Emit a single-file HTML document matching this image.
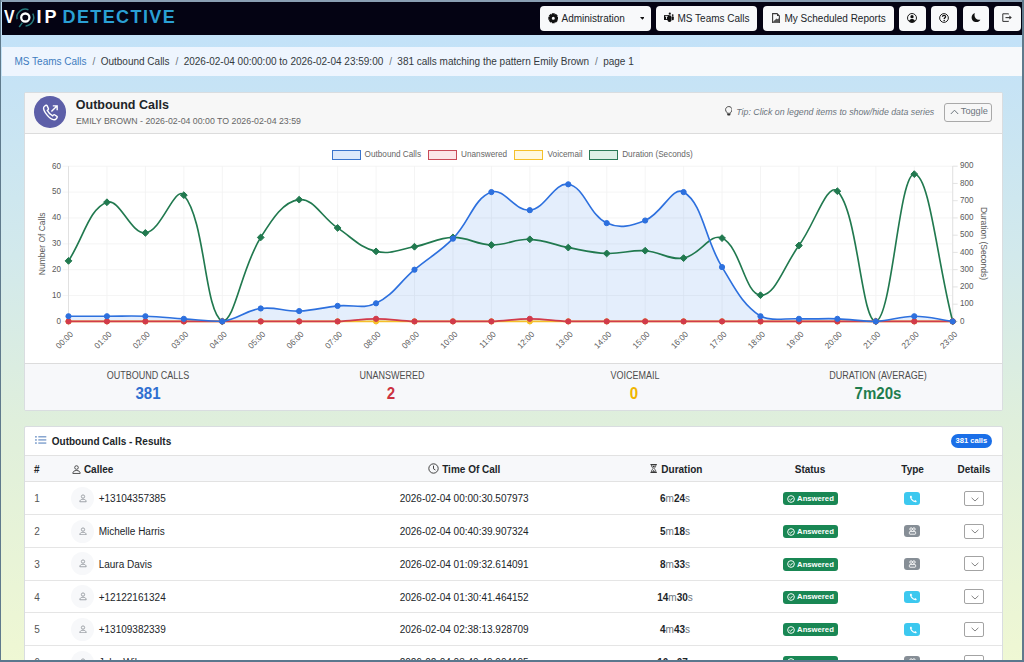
<!DOCTYPE html>
<html><head><meta charset="utf-8">
<style>
*{box-sizing:border-box;margin:0;padding:0}
html,body{width:1024px;height:662px;overflow:hidden}
body{position:relative;font-family:"Liberation Sans",sans-serif;color:#212529;
background:linear-gradient(180deg,#c2e1f8 0px,#c3e2f8 40px,#c6e3f5 85px,#d2e9ec 255px,#dfefdc 420px,#eef7d4 645px,#eff8d4 662px);}
.abs{position:absolute}
.t{position:absolute;white-space:nowrap;line-height:1}
.frame-t{left:0;top:0;width:1024px;height:1.5px;background:#8a9fb3}
.frame-l{left:0;top:0;width:1.4px;height:662px;background:#5f7a8c}
.frame-r{right:0;top:0;width:2px;height:662px;background:#5f7a8c}
.frame-b{left:0;bottom:0;width:1024px;height:2px;background:#5a788e}
.nav{left:1.5px;top:1.5px;width:1020.5px;height:33.5px;background:#040313}
.btn{position:absolute;top:6px;height:25px;background:#f8f9fa;border-radius:4px;font-size:10px;color:#212529;white-space:nowrap}
.btn svg{position:absolute}
.crumbbar{left:1.5px;top:47px;width:1020px;height:29px;background:#f7f9fb}
.crumb{left:1.5px;top:47px;width:638.5px;height:29px;background:#eef5fe;font-size:10px;line-height:29px;padding-left:13px;color:#343a40;white-space:nowrap}
.crumb a{color:#3d7cc0;text-decoration:none}
.crumb .sep{padding:0 5.3px 0 6px;color:#6c757d}
.card{position:absolute;background:#fff;border:1px solid #d9dde0;border-radius:2px;overflow:hidden}
.lbl{font-size:10px;color:#4d4d4d;text-transform:uppercase}
.big{font-size:16px;font-weight:700}
.th{font-size:10px;font-weight:700;color:#212529}
.td{font-size:10px;color:#212529}
.badge-ans{position:absolute;width:55.6px;height:13.1px;background:#198754;border-radius:3px;color:#fff;font-size:7.7px;font-weight:700}
.typeb{position:absolute;width:16.4px;height:12.4px;border-radius:3px}
.detb{position:absolute;width:20px;height:15px;border:1px solid #a3a3a3;border-radius:2px;background:#fff}
.av{position:absolute;width:23px;height:23px;border-radius:50%;background:#f7f8fa}
.rowline{position:absolute;left:0;width:978px;height:1px;background:#e5e5e5}
</style></head><body>
<div class="abs frame-t"></div>
<div class="abs nav"></div>

<!-- logo -->
<div class="t" style="left:3.5px;top:7.5px;font-size:18px;font-weight:700;color:#fff;transform:scaleX(0.88);transform-origin:left">V</div>
<svg class="abs" style="left:14px;top:6px" width="24" height="24" viewBox="0 0 24 24">
  <path d="M3.08,13.25 A8.4,8.4 0 0 1 14.45,3.71" fill="none" stroke="#25797c" stroke-width="1.5"/>
  <path d="M18.72,7.56 A8.4,8.4 0 0 1 11.59,19.89" fill="none" stroke="#25797c" stroke-width="1.5"/>
  <ellipse cx="11.3" cy="11.5" rx="4.1" ry="4.0" fill="none" stroke="#fff" stroke-width="2.3"/>
  <path d="M8.4,16.6 L5.2,21" stroke="#25797c" stroke-width="1.5"/>
</svg>
<div class="t" style="left:36.5px;top:7.5px;font-size:18px;font-weight:700;color:#fff">I</div>
<div class="t" style="left:44.5px;top:7.5px;font-size:18px;font-weight:700;color:#fff">P</div>
<div class="t" style="left:62.5px;top:7.5px;font-size:18px;font-weight:700;color:#2a9fd4;letter-spacing:1.4px">DETECTIVE</div>

<!-- nav buttons -->
<div class="btn" style="left:540px;width:111px">
  <svg style="left:7.6px;top:7.4px" width="10.6" height="10.6" viewBox="0 0 16 16"><path fill="#111" fill-rule="evenodd" d="M13.34,5.74 L15.50,5.84 L15.50,10.16 L13.34,10.26 L13.37,10.18 L14.82,11.78 L11.78,14.82 L10.18,13.37 L10.26,13.34 L10.16,15.50 L5.84,15.50 L5.74,13.34 L5.82,13.37 L4.22,14.82 L1.18,11.78 L2.63,10.18 L2.66,10.26 L0.50,10.16 L0.50,5.84 L2.66,5.74 L2.63,5.82 L1.18,4.22 L4.22,1.18 L5.82,2.63 L5.74,2.66 L5.84,0.50 L10.16,0.50 L10.26,2.66 L10.18,2.63 L11.78,1.18 L14.82,4.22 L13.37,5.82Z M10.3,8 A2.3,2.3 0 1 0 5.7,8 A2.3,2.3 0 1 0 10.3,8Z"/></svg>
  <span class="t" style="left:21.5px;top:8.3px">Administration</span>
  <svg style="left:99.7px;top:11.1px" width="4.8" height="2.8" viewBox="0 0 6 3.5"><path d="M0,0 L6,0 L3,3.5z" fill="#111"/></svg>
</div>
<div class="btn" style="left:655.9px;width:101.6px">
  <svg style="left:8.1px;top:6px" width="11" height="12" viewBox="0 0 11 12"><rect x="3.6" y="3.2" width="3.8" height="6.8" rx="1.7" fill="#111"/><circle cx="5.8" cy="1.7" r="1.1" fill="#111"/><circle cx="8.7" cy="3.1" r="0.9" fill="#111"/><rect x="7.7" y="4.3" width="2.1" height="3.9" rx="0.9" fill="#111"/><rect x="0" y="2.9" width="5" height="5.2" rx="0.5" fill="#111"/><path d="M1.2,4.3 H3.8 M2.5,4.3 V7.1" stroke="#f8f9fa" stroke-width="0.9"/></svg>
  <span class="t" style="left:21.6px;top:8.3px">MS Teams Calls</span>
</div>
<div class="btn" style="left:763px;width:131px">
  <svg style="left:9px;top:6.6px" width="8" height="10.4" viewBox="0 0 8 10.4"><path d="M0.6,0.6 H5 L7.4,3 V9.8 H0.6z" fill="none" stroke="#3a3a3a" stroke-width="1.1"/><path d="M5,0.6 L7.4,3 H5z" fill="#3a3a3a"/><path d="M1.2,9.3 L1.2,8.6 L4.6,5.4 L5.6,6.3 L7,5.2 V9.3z" fill="#555"/></svg>
  <span class="t" style="left:21.5px;top:8.3px">My Scheduled Reports</span>
</div>
<div class="btn" style="left:899px;width:26.5px">
  <svg style="left:8.2px;top:6.6px" width="10" height="10" viewBox="0 0 16 16"><circle cx="8" cy="8" r="7.2" fill="none" stroke="#111" stroke-width="1.5"/><circle cx="8" cy="5.8" r="2.6" fill="#111"/><path d="M3.2,12.6 C4.3,10.4 6,9.6 8,9.6 C10,9.6 11.7,10.4 12.8,12.6 C11.5,14 9.9,14.8 8,14.8 C6.1,14.8 4.5,14 3.2,12.6z" fill="#111"/></svg>
</div>
<div class="btn" style="left:930.5px;width:26.5px">
  <svg style="left:8.2px;top:6.6px" width="10" height="10" viewBox="0 0 16 16"><circle cx="8" cy="8" r="7" fill="none" stroke="#111" stroke-width="1.5"/><path d="M5.5,6.1 C5.5,4.5 6.6,3.6 8,3.6 C9.5,3.6 10.6,4.6 10.6,5.9 C10.6,7.6 8.3,7.7 8.3,9.6" fill="none" stroke="#111" stroke-width="2"/><circle cx="8.3" cy="12" r="1.25" fill="#111"/></svg>
</div>
<div class="btn" style="left:962.5px;width:26.5px">
  <svg style="left:8.2px;top:6.3px" width="10" height="11" viewBox="0 0 16 16"><path d="M6,0.6 C3,1.6 1,4.5 1,7.8 C1,12 4.3,15.3 8.5,15.3 C11.4,15.3 13.8,13.7 15,11.4 C14.3,11.6 13.6,11.7 12.8,11.7 C8.9,11.7 5.6,8.5 5.6,4.5 C5.6,3.1 5.8,1.8 6,0.6z" fill="#111"/></svg>
</div>
<div class="btn" style="left:994px;width:26.5px">
  <svg style="left:8px;top:7px" width="11" height="10" viewBox="0 0 11 10"><path d="M6.5,1.3 V0.8 H0.8 V8.4 H6.5 V7.9" fill="none" stroke="#333" stroke-width="1"/><path d="M3.5,4.6 H9" stroke="#333" stroke-width="1.1"/><path d="M7.4,2.6 L9.8,4.6 L7.4,6.6" fill="#333"/></svg>
</div>

<div class="abs crumbbar"></div>
<div class="abs crumb"><a>MS Teams Calls</a><span class="sep">/</span>Outbound Calls<span class="sep">/</span>2026-02-04 00:00:00 to 2026-02-04 23:59:00<span class="sep">/</span>381 calls matching the pattern Emily Brown<span class="sep">/</span>page 1</div>

<!-- chart card -->
<div class="card" style="left:24px;top:92px;width:978.5px;height:318.5px">
  <div class="abs" style="left:0;top:0;width:978px;height:41px;background:#f7f7f7;border-bottom:1px solid #dcdcdc"></div>
  <div class="abs" style="left:0;top:270px;width:978px;height:48.5px;background:#f7f8fa;border-top:1px solid #dcdcdc"></div>
</div>
<div class="abs" style="left:34.2px;top:96.2px;width:31.6px;height:31.6px;border-radius:50%;background:#5d5fa8"></div>
<svg class="abs" style="left:38.5px;top:100.5px" width="23" height="23" viewBox="0 0 20 20"><path d="M6.2,3.6 L4.8,4.6 C3.6,5.5 3.8,7.6 5.6,10.3 C7.6,13.2 10.2,15.6 12.4,16.2 C13.6,16.5 14.5,16.1 15.2,15.2 L15.8,14.3 C16,14 15.9,13.6 15.6,13.4 L13.5,12 C13.2,11.8 12.8,11.9 12.6,12.1 L11.9,12.9 C10,12 8.1,10 7.2,8.2 L8,7.5 C8.3,7.3 8.3,6.9 8.2,6.6 L7,4 C6.8,3.6 6.5,3.5 6.2,3.6z" fill="none" stroke="#fff" stroke-width="1.2"/><path d="M10.8,9.2 L15.6,4.4 M12,4.2 H15.8 V8" fill="none" stroke="#fff" stroke-width="1.2"/></svg>
<div class="t" style="left:75.8px;top:99.3px;font-size:12.5px;font-weight:700;color:#212529">Outbound Calls</div>
<div class="t" style="left:75.8px;top:115.9px;font-size:9.4px;color:#666;transform:scaleX(0.937);transform-origin:left">EMILY BROWN - 2026-02-04 00:00 TO 2026-02-04 23:59</div>
<svg class="abs" style="left:724.6px;top:106.4px" width="7.6" height="9.8" viewBox="0 0 9 11.5"><path d="M2.3,7.6 C1.2,6.6 0.7,5.5 0.7,4.3 C0.7,2.2 2.4,0.6 4.5,0.6 C6.6,0.6 8.3,2.2 8.3,4.3 C8.3,5.5 7.8,6.6 6.7,7.6 L6.5,8.6 H2.5z" fill="none" stroke="#444" stroke-width="1.15"/><path d="M2.6,9.3 H6.4 V10.2 C6.4,10.8 5.9,11.2 5.3,11.2 H3.7 C3.1,11.2 2.6,10.8 2.6,10.2z" fill="#333"/></svg>
<div class="t" style="left:736.3px;top:107.6px;font-size:8.8px;font-style:italic;color:#6c757d">Tip: Click on legend items to show/hide data series</div>
<div class="abs" style="left:944px;top:102.8px;width:47.8px;height:19px;border:1px solid #a9a9a9;border-radius:3px"></div>
<svg class="abs" style="left:950px;top:109px" width="9" height="6" viewBox="0 0 9 6"><path d="M0.8,5 L4.5,1.2 L8.2,5" fill="none" stroke="#6c757d" stroke-width="1"/></svg>
<div class="t" style="left:960.8px;top:107.2px;font-size:9.2px;color:#6c757d">Toggle</div>

<!-- legend -->
<div class="abs" style="left:331.5px;top:150.3px;width:29px;height:9.8px;border:1.6px solid #3a74cc;background:#dde9fb"></div>
<div class="t" style="left:364.6px;top:151px;font-size:8.2px;color:#666">Outbound Calls</div>
<div class="abs" style="left:428.2px;top:150.3px;width:28.8px;height:9.8px;border:1.6px solid #c84a58;background:#fbe5e8"></div>
<div class="t" style="left:461.1px;top:151px;font-size:8.2px;color:#666">Unanswered</div>
<div class="abs" style="left:514.2px;top:150.3px;width:28.9px;height:9.8px;border:1.6px solid #f5c02a;background:#fff8e0"></div>
<div class="t" style="left:547.6px;top:151px;font-size:8.2px;color:#666">Voicemail</div>
<div class="abs" style="left:589.4px;top:150.3px;width:28.9px;height:9.8px;border:1.6px solid #2b7a57;background:#ddf0e6"></div>
<div class="t" style="left:622.2px;top:151px;font-size:8.2px;color:#666">Duration (Seconds)</div>

<!-- stats -->
<div class="t lbl" style="left:148.2px;top:371.2px;transform:translateX(-50%) scaleX(0.9)">Outbound Calls</div>
<div class="t big" style="left:148.2px;top:386.4px;transform:translateX(-50%) scaleX(0.94);color:#2f6fd0">381</div>
<div class="t lbl" style="left:391.6px;top:371.2px;transform:translateX(-50%) scaleX(0.9)">Unanswered</div>
<div class="t big" style="left:391.4px;top:386.4px;transform:translateX(-50%) scaleX(0.94);color:#cc3340">2</div>
<div class="t lbl" style="left:634.6px;top:371.2px;transform:translateX(-50%) scaleX(0.9)">Voicemail</div>
<div class="t big" style="left:634.4px;top:386.4px;transform:translateX(-50%) scaleX(0.94);color:#f0b500">0</div>
<div class="t lbl" style="left:877.8px;top:371.2px;transform:translateX(-50%) scaleX(0.9)">Duration (Average)</div>
<div class="t big" style="left:878px;top:386.4px;transform:translateX(-50%) scaleX(0.94);color:#1f7d4d">7m20s</div>

<!-- results card -->
<div class="card" style="left:24px;top:425.5px;width:978.5px;height:260px">
  <div class="abs" style="left:0;top:28px;width:978px;height:27.5px;background:#f7f8fa;border-top:1px solid #e2e2e2;border-bottom:1px solid #e2e2e2"></div>
  <div class="rowline" style="top:87.80px"></div>
<div class="rowline" style="top:120.50px"></div>
<div class="rowline" style="top:153.20px"></div>
<div class="rowline" style="top:185.90px"></div>
<div class="rowline" style="top:218.60px"></div>
<div class="rowline" style="top:251.30px"></div>
</div>
<svg class="abs" style="left:34.6px;top:436.3px" width="12" height="8" viewBox="0 0 12 8"><g fill="#4a78b8"><rect x="0.2" y="0.2" width="1.5" height="1.3"/><rect x="0.2" y="3.3" width="1.5" height="1.3"/><rect x="0.2" y="6.4" width="1.5" height="1.3"/></g><path d="M3.3,0.85 H11.3 M3.3,3.95 H11.3 M3.3,7.05 H11.3" stroke="#4a78b8" stroke-width="1"/></svg>
<div class="t" style="left:51.8px;top:436.7px;font-size:10px;font-weight:700;color:#212529">Outbound Calls - Results</div>
<div class="abs" style="left:950.7px;top:434.2px;width:41px;height:13.5px;border-radius:7px;background:#1a6fe8"></div>
<div class="t" style="left:955.5px;top:437.3px;font-size:7.6px;font-weight:700;color:#fff">381 calls</div>

<!-- table header -->
<div class="t th" style="left:34px;top:465.0px">#</div>
<svg class="abs" style="left:71.5px;top:464.8px" width="9" height="9" viewBox="0 0 16 16"><circle cx="8" cy="4.5" r="3.2" fill="none" stroke="#333" stroke-width="1.5"/><path d="M1.5,15 C1.5,11.5 4,9.8 8,9.8 C12,9.8 14.5,11.5 14.5,15z" fill="none" stroke="#333" stroke-width="1.5"/></svg>
<div class="t th" style="left:83.9px;top:465.0px">Callee</div>
<svg class="abs" style="left:428.2px;top:463.4px" width="11" height="11" viewBox="0 0 16 16"><circle cx="8" cy="8" r="6.8" fill="none" stroke="#3a3a3a" stroke-width="1.4"/><path d="M8,3.8 V8.4 L10.8,10.2" fill="none" stroke="#3a3a3a" stroke-width="1.4"/></svg>
<div class="t th" style="left:442.2px;top:465.0px">Time Of Call</div>
<svg class="abs" style="left:649.9px;top:464.1px" width="7.3" height="9" viewBox="0 0 8 10" preserveAspectRatio="none"><path d="M0.5,0.5 H7.5 M0.5,9.5 H7.5" stroke="#222" stroke-width="1"/><path d="M1.4,0.8 C1.4,3.4 3.3,4.2 3.3,5 C3.3,5.8 1.4,6.6 1.4,9.2 H6.6 C6.6,6.6 4.7,5.8 4.7,5 C4.7,4.2 6.6,3.4 6.6,0.8z" fill="none" stroke="#333" stroke-width="0.9"/><path d="M2.3,2 H5.7 L4,4.3z M2.2,8.6 L4,6.6 L5.8,8.6z" fill="#333"/></svg>
<div class="t th" style="left:661.3px;top:465.0px">Duration</div>
<div class="t th" style="left:810px;top:465.0px;transform:translateX(-50%)">Status</div>
<div class="t th" style="left:912.6px;top:465.0px;transform:translateX(-50%)">Type</div>
<div class="t th" style="left:973.9px;top:465.0px;transform:translateX(-50%)">Details</div>

<div class="t td" style="left:34.3px;top:494.40px;color:#555">1</div>
<div class="av" style="left:70.6px;top:487.00px"></div>
<svg class="abs" style="left:78.5px;top:494.00px" width="8" height="8.5" viewBox="0 0 16 16"><circle cx="8" cy="4.6" r="3.3" fill="none" stroke="#8a8f96" stroke-width="1.6"/><path d="M1.6,15 C1.6,11.6 4.2,10 8,10 C11.8,10 14.4,11.6 14.4,15z" fill="none" stroke="#8a8f96" stroke-width="1.6"/></svg>
<div class="t td" style="left:98.7px;top:494.40px">+13104357385</div>
<div class="t td" style="left:464.2px;top:494.40px;transform:translateX(-50%)">2026-02-04 00:00:30.507973</div>
<div class="t td" style="left:675px;top:494.40px;transform:translateX(-50%);color:#6c757d"><b style="color:#212529">6</b>m<b style="color:#212529">24</b>s</div>
<div class="badge-ans" style="left:782.5px;top:492.40px"><svg class="abs" style="left:4.3px;top:2.5px" width="8" height="8" viewBox="0 0 16 16"><circle cx="8" cy="8" r="6.7" fill="none" stroke="#fff" stroke-width="1.9"/><path d="M4.8,8.3 L7.1,10.5 L11.3,5.9" fill="none" stroke="#fff" stroke-width="1.9"/></svg><span class="t" style="left:14.6px;top:2.9px">Answered</span></div>
<div class="typeb" style="left:904px;top:492.40px;background:#3cc8ef"><svg class="abs" style="left:4.5px;top:2.4px" width="8" height="8" viewBox="0 0 16 16"><path d="M3.2,2.6 C2,5.2 6.4,12.6 13,13.2" fill="none" stroke="#fff" stroke-width="2.2"/><path d="M1.6,2.4 L4.2,0.8 L6.6,4.4 L4.4,5.8z M10.8,12.4 L12.4,10 L15.6,12.6 L14,15.2z" fill="#fff"/></svg></div>
<div class="detb" style="left:964px;top:491.00px"><svg class="abs" style="left:5.5px;top:4.5px" width="8" height="5" viewBox="0 0 8 5"><path d="M0.6,0.8 L4,4 L7.4,0.8" fill="none" stroke="#777" stroke-width="0.9"/></svg></div>
<div class="t td" style="left:34.3px;top:527.10px;color:#555">2</div>
<div class="av" style="left:70.6px;top:519.70px"></div>
<svg class="abs" style="left:78.5px;top:526.70px" width="8" height="8.5" viewBox="0 0 16 16"><circle cx="8" cy="4.6" r="3.3" fill="none" stroke="#8a8f96" stroke-width="1.6"/><path d="M1.6,15 C1.6,11.6 4.2,10 8,10 C11.8,10 14.4,11.6 14.4,15z" fill="none" stroke="#8a8f96" stroke-width="1.6"/></svg>
<div class="t td" style="left:98.7px;top:527.10px">Michelle Harris</div>
<div class="t td" style="left:464.2px;top:527.10px;transform:translateX(-50%)">2026-02-04 00:40:39.907324</div>
<div class="t td" style="left:675px;top:527.10px;transform:translateX(-50%);color:#6c757d"><b style="color:#212529">5</b>m<b style="color:#212529">18</b>s</div>
<div class="badge-ans" style="left:782.5px;top:525.10px"><svg class="abs" style="left:4.3px;top:2.5px" width="8" height="8" viewBox="0 0 16 16"><circle cx="8" cy="8" r="6.7" fill="none" stroke="#fff" stroke-width="1.9"/><path d="M4.8,8.3 L7.1,10.5 L11.3,5.9" fill="none" stroke="#fff" stroke-width="1.9"/></svg><span class="t" style="left:14.6px;top:2.9px">Answered</span></div>
<div class="typeb" style="left:904px;top:525.10px;background:#868e96"><svg class="abs" style="left:3.7px;top:2.2px" width="9" height="8" viewBox="0 0 9 8"><circle cx="3.1" cy="2.1" r="1.3" fill="none" stroke="#fff" stroke-width="0.9"/><circle cx="5.9" cy="2.1" r="1.3" fill="none" stroke="#fff" stroke-width="0.9"/><rect x="1.4" y="4.6" width="6.2" height="2.6" rx="0.6" fill="none" stroke="#fff" stroke-width="0.9"/></svg></div>
<div class="detb" style="left:964px;top:523.70px"><svg class="abs" style="left:5.5px;top:4.5px" width="8" height="5" viewBox="0 0 8 5"><path d="M0.6,0.8 L4,4 L7.4,0.8" fill="none" stroke="#777" stroke-width="0.9"/></svg></div>
<div class="t td" style="left:34.3px;top:559.80px;color:#555">3</div>
<div class="av" style="left:70.6px;top:552.40px"></div>
<svg class="abs" style="left:78.5px;top:559.40px" width="8" height="8.5" viewBox="0 0 16 16"><circle cx="8" cy="4.6" r="3.3" fill="none" stroke="#8a8f96" stroke-width="1.6"/><path d="M1.6,15 C1.6,11.6 4.2,10 8,10 C11.8,10 14.4,11.6 14.4,15z" fill="none" stroke="#8a8f96" stroke-width="1.6"/></svg>
<div class="t td" style="left:98.7px;top:559.80px">Laura Davis</div>
<div class="t td" style="left:464.2px;top:559.80px;transform:translateX(-50%)">2026-02-04 01:09:32.614091</div>
<div class="t td" style="left:675px;top:559.80px;transform:translateX(-50%);color:#6c757d"><b style="color:#212529">8</b>m<b style="color:#212529">33</b>s</div>
<div class="badge-ans" style="left:782.5px;top:557.80px"><svg class="abs" style="left:4.3px;top:2.5px" width="8" height="8" viewBox="0 0 16 16"><circle cx="8" cy="8" r="6.7" fill="none" stroke="#fff" stroke-width="1.9"/><path d="M4.8,8.3 L7.1,10.5 L11.3,5.9" fill="none" stroke="#fff" stroke-width="1.9"/></svg><span class="t" style="left:14.6px;top:2.9px">Answered</span></div>
<div class="typeb" style="left:904px;top:557.80px;background:#868e96"><svg class="abs" style="left:3.7px;top:2.2px" width="9" height="8" viewBox="0 0 9 8"><circle cx="3.1" cy="2.1" r="1.3" fill="none" stroke="#fff" stroke-width="0.9"/><circle cx="5.9" cy="2.1" r="1.3" fill="none" stroke="#fff" stroke-width="0.9"/><rect x="1.4" y="4.6" width="6.2" height="2.6" rx="0.6" fill="none" stroke="#fff" stroke-width="0.9"/></svg></div>
<div class="detb" style="left:964px;top:556.40px"><svg class="abs" style="left:5.5px;top:4.5px" width="8" height="5" viewBox="0 0 8 5"><path d="M0.6,0.8 L4,4 L7.4,0.8" fill="none" stroke="#777" stroke-width="0.9"/></svg></div>
<div class="t td" style="left:34.3px;top:592.50px;color:#555">4</div>
<div class="av" style="left:70.6px;top:585.10px"></div>
<svg class="abs" style="left:78.5px;top:592.10px" width="8" height="8.5" viewBox="0 0 16 16"><circle cx="8" cy="4.6" r="3.3" fill="none" stroke="#8a8f96" stroke-width="1.6"/><path d="M1.6,15 C1.6,11.6 4.2,10 8,10 C11.8,10 14.4,11.6 14.4,15z" fill="none" stroke="#8a8f96" stroke-width="1.6"/></svg>
<div class="t td" style="left:98.7px;top:592.50px">+12122161324</div>
<div class="t td" style="left:464.2px;top:592.50px;transform:translateX(-50%)">2026-02-04 01:30:41.464152</div>
<div class="t td" style="left:675px;top:592.50px;transform:translateX(-50%);color:#6c757d"><b style="color:#212529">14</b>m<b style="color:#212529">30</b>s</div>
<div class="badge-ans" style="left:782.5px;top:590.50px"><svg class="abs" style="left:4.3px;top:2.5px" width="8" height="8" viewBox="0 0 16 16"><circle cx="8" cy="8" r="6.7" fill="none" stroke="#fff" stroke-width="1.9"/><path d="M4.8,8.3 L7.1,10.5 L11.3,5.9" fill="none" stroke="#fff" stroke-width="1.9"/></svg><span class="t" style="left:14.6px;top:2.9px">Answered</span></div>
<div class="typeb" style="left:904px;top:590.50px;background:#3cc8ef"><svg class="abs" style="left:4.5px;top:2.4px" width="8" height="8" viewBox="0 0 16 16"><path d="M3.2,2.6 C2,5.2 6.4,12.6 13,13.2" fill="none" stroke="#fff" stroke-width="2.2"/><path d="M1.6,2.4 L4.2,0.8 L6.6,4.4 L4.4,5.8z M10.8,12.4 L12.4,10 L15.6,12.6 L14,15.2z" fill="#fff"/></svg></div>
<div class="detb" style="left:964px;top:589.10px"><svg class="abs" style="left:5.5px;top:4.5px" width="8" height="5" viewBox="0 0 8 5"><path d="M0.6,0.8 L4,4 L7.4,0.8" fill="none" stroke="#777" stroke-width="0.9"/></svg></div>
<div class="t td" style="left:34.3px;top:625.20px;color:#555">5</div>
<div class="av" style="left:70.6px;top:617.80px"></div>
<svg class="abs" style="left:78.5px;top:624.80px" width="8" height="8.5" viewBox="0 0 16 16"><circle cx="8" cy="4.6" r="3.3" fill="none" stroke="#8a8f96" stroke-width="1.6"/><path d="M1.6,15 C1.6,11.6 4.2,10 8,10 C11.8,10 14.4,11.6 14.4,15z" fill="none" stroke="#8a8f96" stroke-width="1.6"/></svg>
<div class="t td" style="left:98.7px;top:625.20px">+13109382339</div>
<div class="t td" style="left:464.2px;top:625.20px;transform:translateX(-50%)">2026-02-04 02:38:13.928709</div>
<div class="t td" style="left:675px;top:625.20px;transform:translateX(-50%);color:#6c757d"><b style="color:#212529">4</b>m<b style="color:#212529">43</b>s</div>
<div class="badge-ans" style="left:782.5px;top:623.20px"><svg class="abs" style="left:4.3px;top:2.5px" width="8" height="8" viewBox="0 0 16 16"><circle cx="8" cy="8" r="6.7" fill="none" stroke="#fff" stroke-width="1.9"/><path d="M4.8,8.3 L7.1,10.5 L11.3,5.9" fill="none" stroke="#fff" stroke-width="1.9"/></svg><span class="t" style="left:14.6px;top:2.9px">Answered</span></div>
<div class="typeb" style="left:904px;top:623.20px;background:#3cc8ef"><svg class="abs" style="left:4.5px;top:2.4px" width="8" height="8" viewBox="0 0 16 16"><path d="M3.2,2.6 C2,5.2 6.4,12.6 13,13.2" fill="none" stroke="#fff" stroke-width="2.2"/><path d="M1.6,2.4 L4.2,0.8 L6.6,4.4 L4.4,5.8z M10.8,12.4 L12.4,10 L15.6,12.6 L14,15.2z" fill="#fff"/></svg></div>
<div class="detb" style="left:964px;top:621.80px"><svg class="abs" style="left:5.5px;top:4.5px" width="8" height="5" viewBox="0 0 8 5"><path d="M0.6,0.8 L4,4 L7.4,0.8" fill="none" stroke="#777" stroke-width="0.9"/></svg></div>
<div class="t td" style="left:34.3px;top:657.90px;color:#555">6</div>
<div class="av" style="left:70.6px;top:650.50px"></div>
<svg class="abs" style="left:78.5px;top:657.50px" width="8" height="8.5" viewBox="0 0 16 16"><circle cx="8" cy="4.6" r="3.3" fill="none" stroke="#8a8f96" stroke-width="1.6"/><path d="M1.6,15 C1.6,11.6 4.2,10 8,10 C11.8,10 14.4,11.6 14.4,15z" fill="none" stroke="#8a8f96" stroke-width="1.6"/></svg>
<div class="t td" style="left:98.7px;top:657.90px">John Wilson</div>
<div class="t td" style="left:464.2px;top:657.90px;transform:translateX(-50%)">2026-02-04 03:40:40.904105</div>
<div class="t td" style="left:675px;top:657.90px;transform:translateX(-50%);color:#6c757d"><b style="color:#212529">10</b>m<b style="color:#212529">07</b>s</div>
<div class="badge-ans" style="left:782.5px;top:655.90px"><svg class="abs" style="left:4.3px;top:2.5px" width="8" height="8" viewBox="0 0 16 16"><circle cx="8" cy="8" r="6.7" fill="none" stroke="#fff" stroke-width="1.9"/><path d="M4.8,8.3 L7.1,10.5 L11.3,5.9" fill="none" stroke="#fff" stroke-width="1.9"/></svg><span class="t" style="left:14.6px;top:2.9px">Answered</span></div>
<div class="typeb" style="left:904px;top:655.90px;background:#868e96"><svg class="abs" style="left:3.7px;top:2.2px" width="9" height="8" viewBox="0 0 9 8"><circle cx="3.1" cy="2.1" r="1.3" fill="none" stroke="#fff" stroke-width="0.9"/><circle cx="5.9" cy="2.1" r="1.3" fill="none" stroke="#fff" stroke-width="0.9"/><rect x="1.4" y="4.6" width="6.2" height="2.6" rx="0.6" fill="none" stroke="#fff" stroke-width="0.9"/></svg></div>
<div class="detb" style="left:964px;top:654.50px"><svg class="abs" style="left:5.5px;top:4.5px" width="8" height="5" viewBox="0 0 8 5"><path d="M0.6,0.8 L4,4 L7.4,0.8" fill="none" stroke="#777" stroke-width="0.9"/></svg></div>

<svg width="1024" height="662" viewBox="0 0 1024 662" style="position:absolute;left:0;top:0"><g stroke="#f1f1f1" stroke-width="0.8" shape-rendering="auto"><line x1="68.50" y1="166.2" x2="68.50" y2="326.4"/><line x1="106.94" y1="166.2" x2="106.94" y2="326.4"/><line x1="145.39" y1="166.2" x2="145.39" y2="326.4"/><line x1="183.83" y1="166.2" x2="183.83" y2="326.4"/><line x1="222.27" y1="166.2" x2="222.27" y2="326.4"/><line x1="260.72" y1="166.2" x2="260.72" y2="326.4"/><line x1="299.16" y1="166.2" x2="299.16" y2="326.4"/><line x1="337.60" y1="166.2" x2="337.60" y2="326.4"/><line x1="376.05" y1="166.2" x2="376.05" y2="326.4"/><line x1="414.49" y1="166.2" x2="414.49" y2="326.4"/><line x1="452.93" y1="166.2" x2="452.93" y2="326.4"/><line x1="491.38" y1="166.2" x2="491.38" y2="326.4"/><line x1="529.82" y1="166.2" x2="529.82" y2="326.4"/><line x1="568.27" y1="166.2" x2="568.27" y2="326.4"/><line x1="606.71" y1="166.2" x2="606.71" y2="326.4"/><line x1="645.15" y1="166.2" x2="645.15" y2="326.4"/><line x1="683.60" y1="166.2" x2="683.60" y2="326.4"/><line x1="722.04" y1="166.2" x2="722.04" y2="326.4"/><line x1="760.48" y1="166.2" x2="760.48" y2="326.4"/><line x1="798.93" y1="166.2" x2="798.93" y2="326.4"/><line x1="837.37" y1="166.2" x2="837.37" y2="326.4"/><line x1="875.81" y1="166.2" x2="875.81" y2="326.4"/><line x1="914.26" y1="166.2" x2="914.26" y2="326.4"/><line x1="952.70" y1="166.2" x2="952.70" y2="326.4"/><line x1="62.5" y1="321.40" x2="952.7" y2="321.40"/><line x1="62.5" y1="295.53" x2="952.7" y2="295.53"/><line x1="62.5" y1="269.67" x2="952.7" y2="269.67"/><line x1="62.5" y1="243.80" x2="952.7" y2="243.80"/><line x1="62.5" y1="217.93" x2="952.7" y2="217.93"/><line x1="62.5" y1="192.07" x2="952.7" y2="192.07"/><line x1="62.5" y1="166.20" x2="952.7" y2="166.20"/></g><g stroke="#dcdcdc" stroke-width="0.8"><line x1="952.7" y1="321.40" x2="957.7" y2="321.40"/><line x1="952.7" y1="304.16" x2="957.7" y2="304.16"/><line x1="952.7" y1="286.91" x2="957.7" y2="286.91"/><line x1="952.7" y1="269.67" x2="957.7" y2="269.67"/><line x1="952.7" y1="252.42" x2="957.7" y2="252.42"/><line x1="952.7" y1="235.18" x2="957.7" y2="235.18"/><line x1="952.7" y1="217.93" x2="957.7" y2="217.93"/><line x1="952.7" y1="200.69" x2="957.7" y2="200.69"/><line x1="952.7" y1="183.44" x2="957.7" y2="183.44"/><line x1="952.7" y1="166.20" x2="957.7" y2="166.20"/><line x1="952.7" y1="166.2" x2="952.7" y2="321.4"/><line x1="68.5" y1="166.2" x2="68.5" y2="321.4"/></g><path d="M68.50,316.23 C83.88,316.23 91.57,316.23 106.94,316.23 C122.32,316.23 130.03,315.71 145.39,316.23 C160.78,316.74 168.45,317.78 183.83,318.81 C199.21,319.85 207.29,321.40 222.27,321.40 C238.05,319.28 244.95,310.59 260.72,308.47 C275.70,306.45 283.84,311.57 299.16,311.05 C314.59,310.53 322.18,307.44 337.60,305.88 C352.93,304.33 362.82,309.52 376.05,303.29 C393.58,295.04 398.86,282.81 414.49,269.67 C429.61,256.95 439.09,252.60 452.93,238.63 C469.85,221.56 473.33,198.75 491.38,192.07 C504.08,187.37 515.11,211.66 529.82,210.17 C545.86,208.55 554.15,181.93 568.27,184.31 C584.90,187.11 588.68,214.61 606.71,223.11 C619.43,229.10 631.43,226.06 645.15,220.52 C662.19,213.64 672.46,185.32 683.60,192.07 C703.22,203.95 704.37,238.54 722.04,267.08 C735.12,288.21 741.47,303.43 760.48,316.23 C772.22,321.40 783.53,318.30 798.93,318.81 C814.29,319.33 822.01,318.30 837.37,318.81 C852.76,319.33 860.49,321.40 875.81,321.40 C891.24,320.88 898.88,316.23 914.26,316.23 C929.63,316.23 937.32,319.33 952.70,321.40 L952.70,321.4 L68.50,321.4 Z" fill="rgba(47,120,235,0.13)" stroke="none"/><g fill="#5a5a5a" font-size="8" font-family="Liberation Sans, sans-serif"><text transform="translate(61,323.80) scale(0.95,1)" font-size="8.5" text-anchor="end">0</text><text transform="translate(61,297.93) scale(0.95,1)" font-size="8.5" text-anchor="end">10</text><text transform="translate(61,272.07) scale(0.95,1)" font-size="8.5" text-anchor="end">20</text><text transform="translate(61,246.20) scale(0.95,1)" font-size="8.5" text-anchor="end">30</text><text transform="translate(61,220.33) scale(0.95,1)" font-size="8.5" text-anchor="end">40</text><text transform="translate(61,194.47) scale(0.95,1)" font-size="8.5" text-anchor="end">50</text><text transform="translate(61,168.60) scale(0.95,1)" font-size="8.5" text-anchor="end">60</text><text transform="translate(960,323.60) scale(0.95,1)" font-size="8.5">0</text><text transform="translate(960,306.36) scale(0.95,1)" font-size="8.5">100</text><text transform="translate(960,289.11) scale(0.95,1)" font-size="8.5">200</text><text transform="translate(960,271.87) scale(0.95,1)" font-size="8.5">300</text><text transform="translate(960,254.62) scale(0.95,1)" font-size="8.5">400</text><text transform="translate(960,237.38) scale(0.95,1)" font-size="8.5">500</text><text transform="translate(960,220.13) scale(0.95,1)" font-size="8.5">600</text><text transform="translate(960,202.89) scale(0.95,1)" font-size="8.5">700</text><text transform="translate(960,185.64) scale(0.95,1)" font-size="8.5">800</text><text transform="translate(960,168.40) scale(0.95,1)" font-size="8.5">900</text><text transform="translate(71.50,332.8) rotate(-45) scale(0.95,1)" font-size="8.5" text-anchor="end" dy="3">00:00</text><text transform="translate(109.94,332.8) rotate(-45) scale(0.95,1)" font-size="8.5" text-anchor="end" dy="3">01:00</text><text transform="translate(148.39,332.8) rotate(-45) scale(0.95,1)" font-size="8.5" text-anchor="end" dy="3">02:00</text><text transform="translate(186.83,332.8) rotate(-45) scale(0.95,1)" font-size="8.5" text-anchor="end" dy="3">03:00</text><text transform="translate(225.27,332.8) rotate(-45) scale(0.95,1)" font-size="8.5" text-anchor="end" dy="3">04:00</text><text transform="translate(263.72,332.8) rotate(-45) scale(0.95,1)" font-size="8.5" text-anchor="end" dy="3">05:00</text><text transform="translate(302.16,332.8) rotate(-45) scale(0.95,1)" font-size="8.5" text-anchor="end" dy="3">06:00</text><text transform="translate(340.60,332.8) rotate(-45) scale(0.95,1)" font-size="8.5" text-anchor="end" dy="3">07:00</text><text transform="translate(379.05,332.8) rotate(-45) scale(0.95,1)" font-size="8.5" text-anchor="end" dy="3">08:00</text><text transform="translate(417.49,332.8) rotate(-45) scale(0.95,1)" font-size="8.5" text-anchor="end" dy="3">09:00</text><text transform="translate(455.93,332.8) rotate(-45) scale(0.95,1)" font-size="8.5" text-anchor="end" dy="3">10:00</text><text transform="translate(494.38,332.8) rotate(-45) scale(0.95,1)" font-size="8.5" text-anchor="end" dy="3">11:00</text><text transform="translate(532.82,332.8) rotate(-45) scale(0.95,1)" font-size="8.5" text-anchor="end" dy="3">12:00</text><text transform="translate(571.27,332.8) rotate(-45) scale(0.95,1)" font-size="8.5" text-anchor="end" dy="3">13:00</text><text transform="translate(609.71,332.8) rotate(-45) scale(0.95,1)" font-size="8.5" text-anchor="end" dy="3">14:00</text><text transform="translate(648.15,332.8) rotate(-45) scale(0.95,1)" font-size="8.5" text-anchor="end" dy="3">15:00</text><text transform="translate(686.60,332.8) rotate(-45) scale(0.95,1)" font-size="8.5" text-anchor="end" dy="3">16:00</text><text transform="translate(725.04,332.8) rotate(-45) scale(0.95,1)" font-size="8.5" text-anchor="end" dy="3">17:00</text><text transform="translate(763.48,332.8) rotate(-45) scale(0.95,1)" font-size="8.5" text-anchor="end" dy="3">18:00</text><text transform="translate(801.93,332.8) rotate(-45) scale(0.95,1)" font-size="8.5" text-anchor="end" dy="3">19:00</text><text transform="translate(840.37,332.8) rotate(-45) scale(0.95,1)" font-size="8.5" text-anchor="end" dy="3">20:00</text><text transform="translate(878.81,332.8) rotate(-45) scale(0.95,1)" font-size="8.5" text-anchor="end" dy="3">21:00</text><text transform="translate(917.26,332.8) rotate(-45) scale(0.95,1)" font-size="8.5" text-anchor="end" dy="3">22:00</text><text transform="translate(955.70,332.8) rotate(-45) scale(0.95,1)" font-size="8.5" text-anchor="end" dy="3">23:00</text><text transform="translate(44.8,243.8) rotate(-90)" font-size="8.5" text-anchor="middle">Number Of Calls</text><text transform="translate(980.8,243.5) rotate(90)" font-size="8.5" text-anchor="middle">Duration (Seconds)</text></g><path d="M68.50,260.87 C83.88,237.42 88.87,208.81 106.94,202.24 C119.62,197.63 130.71,234.29 145.39,232.94 C161.46,231.46 174.91,184.91 183.83,195.17 C205.67,220.30 204.18,311.46 222.27,321.40 C234.94,321.40 241.29,268.17 260.72,237.42 C272.05,219.48 282.85,201.67 299.16,199.65 C313.61,197.87 321.78,217.29 337.60,227.94 C352.54,237.98 359.51,247.35 376.05,251.39 C390.27,254.86 399.28,249.50 414.49,246.73 C430.03,243.91 437.49,237.77 452.93,237.42 C468.24,237.08 475.94,244.63 491.38,245.01 C506.69,245.38 514.54,238.80 529.82,239.32 C545.29,239.84 552.80,244.75 568.27,247.59 C583.56,250.41 591.26,252.83 606.71,253.46 C622.02,254.07 629.90,249.77 645.15,250.70 C660.65,251.64 669.00,260.50 683.60,258.11 C699.75,255.47 710.16,232.38 722.04,238.11 C740.91,247.21 744.40,293.64 760.48,295.19 C775.16,296.60 783.99,265.72 798.93,245.52 C814.75,224.13 827.25,181.22 837.37,191.20 C858.01,211.57 861.31,321.40 875.81,321.40 C892.07,317.79 898.88,174.13 914.26,174.13 C929.63,174.13 937.32,262.49 952.70,321.40" fill="none" stroke="#21794f" stroke-width="1.65"/><g fill="#21794f" stroke="#21794f" stroke-width="1"><path d="M68.50,257.47 L71.90,260.87 L68.50,264.27 L65.10,260.87 Z"/><path d="M106.94,198.84 L110.34,202.24 L106.94,205.64 L103.54,202.24 Z"/><path d="M145.39,229.54 L148.79,232.94 L145.39,236.34 L141.99,232.94 Z"/><path d="M183.83,191.77 L187.23,195.17 L183.83,198.57 L180.43,195.17 Z"/><path d="M222.27,318.00 L225.67,321.40 L222.27,324.80 L218.87,321.40 Z"/><path d="M260.72,234.02 L264.12,237.42 L260.72,240.82 L257.32,237.42 Z"/><path d="M299.16,196.25 L302.56,199.65 L299.16,203.05 L295.76,199.65 Z"/><path d="M337.60,224.54 L341.00,227.94 L337.60,231.34 L334.20,227.94 Z"/><path d="M376.05,247.99 L379.45,251.39 L376.05,254.79 L372.65,251.39 Z"/><path d="M414.49,243.33 L417.89,246.73 L414.49,250.13 L411.09,246.73 Z"/><path d="M452.93,234.02 L456.33,237.42 L452.93,240.82 L449.53,237.42 Z"/><path d="M491.38,241.61 L494.78,245.01 L491.38,248.41 L487.98,245.01 Z"/><path d="M529.82,235.92 L533.22,239.32 L529.82,242.72 L526.42,239.32 Z"/><path d="M568.27,244.19 L571.67,247.59 L568.27,250.99 L564.87,247.59 Z"/><path d="M606.71,250.06 L610.11,253.46 L606.71,256.86 L603.31,253.46 Z"/><path d="M645.15,247.30 L648.55,250.70 L645.15,254.10 L641.75,250.70 Z"/><path d="M683.60,254.71 L687.00,258.11 L683.60,261.51 L680.20,258.11 Z"/><path d="M722.04,234.71 L725.44,238.11 L722.04,241.51 L718.64,238.11 Z"/><path d="M760.48,291.79 L763.88,295.19 L760.48,298.59 L757.08,295.19 Z"/><path d="M798.93,242.12 L802.33,245.52 L798.93,248.92 L795.53,245.52 Z"/><path d="M837.37,187.80 L840.77,191.20 L837.37,194.60 L833.97,191.20 Z"/><path d="M875.81,318.00 L879.21,321.40 L875.81,324.80 L872.41,321.40 Z"/><path d="M914.26,170.73 L917.66,174.13 L914.26,177.53 L910.86,174.13 Z"/><path d="M952.70,318.00 L956.10,321.40 L952.70,324.80 L949.30,321.40 Z"/></g><path d="M68.50,321.40 C83.88,321.40 91.57,321.40 106.94,321.40 C122.32,321.40 130.01,321.40 145.39,321.40 C160.76,321.40 168.45,321.40 183.83,321.40 C199.21,321.40 206.90,321.40 222.27,321.40 C237.65,321.40 245.34,321.40 260.72,321.40 C276.09,321.40 283.78,321.40 299.16,321.40 C314.54,321.40 322.23,321.40 337.60,321.40 C352.98,321.40 360.67,321.40 376.05,321.40 C391.43,321.40 399.11,321.40 414.49,321.40 C429.87,321.40 437.56,321.40 452.93,321.40 C468.31,321.40 476.00,321.40 491.38,321.40 C506.76,321.40 514.44,321.40 529.82,321.40 C545.20,321.40 552.89,321.40 568.27,321.40 C583.64,321.40 591.33,321.40 606.71,321.40 C622.09,321.40 629.77,321.40 645.15,321.40 C660.53,321.40 668.22,321.40 683.60,321.40 C698.97,321.40 706.66,321.40 722.04,321.40 C737.42,321.40 745.11,321.40 760.48,321.40 C775.86,321.40 783.55,321.40 798.93,321.40 C814.30,321.40 821.99,321.40 837.37,321.40 C852.75,321.40 860.44,321.40 875.81,321.40 C891.19,321.40 898.88,321.40 914.26,321.40 C929.63,321.40 937.32,321.40 952.70,321.40" fill="none" stroke="#f5c02a" stroke-width="1.65"/><g fill="#f5c02a" stroke="#f5c02a" stroke-width="1"><circle cx="68.50" cy="321.40" r="2.6"/><circle cx="106.94" cy="321.40" r="2.6"/><circle cx="145.39" cy="321.40" r="2.6"/><circle cx="183.83" cy="321.40" r="2.6"/><circle cx="222.27" cy="321.40" r="2.6"/><circle cx="260.72" cy="321.40" r="2.6"/><circle cx="299.16" cy="321.40" r="2.6"/><circle cx="337.60" cy="321.40" r="2.6"/><circle cx="376.05" cy="321.40" r="2.6"/><circle cx="414.49" cy="321.40" r="2.6"/><circle cx="452.93" cy="321.40" r="2.6"/><circle cx="491.38" cy="321.40" r="2.6"/><circle cx="529.82" cy="321.40" r="2.6"/><circle cx="568.27" cy="321.40" r="2.6"/><circle cx="606.71" cy="321.40" r="2.6"/><circle cx="645.15" cy="321.40" r="2.6"/><circle cx="683.60" cy="321.40" r="2.6"/><circle cx="722.04" cy="321.40" r="2.6"/><circle cx="760.48" cy="321.40" r="2.6"/><circle cx="798.93" cy="321.40" r="2.6"/><circle cx="837.37" cy="321.40" r="2.6"/><circle cx="875.81" cy="321.40" r="2.6"/><circle cx="914.26" cy="321.40" r="2.6"/><circle cx="952.70" cy="321.40" r="2.6"/></g><path d="M68.50,321.40 C83.88,321.40 91.57,321.40 106.94,321.40 C122.32,321.40 130.01,321.40 145.39,321.40 C160.76,321.40 168.45,321.40 183.83,321.40 C199.21,321.40 206.90,321.40 222.27,321.40 C237.65,321.40 245.34,321.40 260.72,321.40 C276.09,321.40 283.78,321.40 299.16,321.40 C314.54,321.40 322.24,321.40 337.60,321.40 C353.00,320.88 360.67,318.81 376.05,318.81 C391.43,318.81 399.10,320.88 414.49,321.40 C429.85,321.40 437.56,321.40 452.93,321.40 C468.31,321.40 476.02,321.40 491.38,321.40 C506.77,320.88 514.44,318.81 529.82,318.81 C545.20,318.81 552.87,320.88 568.27,321.40 C583.63,321.40 591.33,321.40 606.71,321.40 C622.09,321.40 629.77,321.40 645.15,321.40 C660.53,321.40 668.22,321.40 683.60,321.40 C698.97,321.40 706.66,321.40 722.04,321.40 C737.42,321.40 745.11,321.40 760.48,321.40 C775.86,321.40 783.55,321.40 798.93,321.40 C814.30,321.40 821.99,321.40 837.37,321.40 C852.75,321.40 860.44,321.40 875.81,321.40 C891.19,321.40 898.88,321.40 914.26,321.40 C929.63,321.40 937.32,321.40 952.70,321.40" fill="none" stroke="#d13b4b" stroke-width="1.65"/><g fill="#d13b4b" stroke="#d13b4b" stroke-width="1"><circle cx="68.50" cy="321.40" r="2.6"/><circle cx="106.94" cy="321.40" r="2.6"/><circle cx="145.39" cy="321.40" r="2.6"/><circle cx="183.83" cy="321.40" r="2.6"/><circle cx="222.27" cy="321.40" r="2.6"/><circle cx="260.72" cy="321.40" r="2.6"/><circle cx="299.16" cy="321.40" r="2.6"/><circle cx="337.60" cy="321.40" r="2.6"/><circle cx="376.05" cy="318.81" r="2.6"/><circle cx="414.49" cy="321.40" r="2.6"/><circle cx="452.93" cy="321.40" r="2.6"/><circle cx="491.38" cy="321.40" r="2.6"/><circle cx="529.82" cy="318.81" r="2.6"/><circle cx="568.27" cy="321.40" r="2.6"/><circle cx="606.71" cy="321.40" r="2.6"/><circle cx="645.15" cy="321.40" r="2.6"/><circle cx="683.60" cy="321.40" r="2.6"/><circle cx="722.04" cy="321.40" r="2.6"/><circle cx="760.48" cy="321.40" r="2.6"/><circle cx="798.93" cy="321.40" r="2.6"/><circle cx="837.37" cy="321.40" r="2.6"/><circle cx="875.81" cy="321.40" r="2.6"/><circle cx="914.26" cy="321.40" r="2.6"/><circle cx="952.70" cy="321.40" r="2.6"/></g><path d="M68.50,316.23 C83.88,316.23 91.57,316.23 106.94,316.23 C122.32,316.23 130.03,315.71 145.39,316.23 C160.78,316.74 168.45,317.78 183.83,318.81 C199.21,319.85 207.29,321.40 222.27,321.40 C238.05,319.28 244.95,310.59 260.72,308.47 C275.70,306.45 283.84,311.57 299.16,311.05 C314.59,310.53 322.18,307.44 337.60,305.88 C352.93,304.33 362.82,309.52 376.05,303.29 C393.58,295.04 398.86,282.81 414.49,269.67 C429.61,256.95 439.09,252.60 452.93,238.63 C469.85,221.56 473.33,198.75 491.38,192.07 C504.08,187.37 515.11,211.66 529.82,210.17 C545.86,208.55 554.15,181.93 568.27,184.31 C584.90,187.11 588.68,214.61 606.71,223.11 C619.43,229.10 631.43,226.06 645.15,220.52 C662.19,213.64 672.46,185.32 683.60,192.07 C703.22,203.95 704.37,238.54 722.04,267.08 C735.12,288.21 741.47,303.43 760.48,316.23 C772.22,321.40 783.53,318.30 798.93,318.81 C814.29,319.33 822.01,318.30 837.37,318.81 C852.76,319.33 860.49,321.40 875.81,321.40 C891.24,320.88 898.88,316.23 914.26,316.23 C929.63,316.23 937.32,319.33 952.70,321.40" fill="none" stroke="#2d70de" stroke-width="1.65"/><g fill="#2d70de" stroke="#2d70de" stroke-width="1"><circle cx="68.50" cy="316.23" r="2.6"/><circle cx="106.94" cy="316.23" r="2.6"/><circle cx="145.39" cy="316.23" r="2.6"/><circle cx="183.83" cy="318.81" r="2.6"/><circle cx="222.27" cy="321.40" r="2.6"/><circle cx="260.72" cy="308.47" r="2.6"/><circle cx="299.16" cy="311.05" r="2.6"/><circle cx="337.60" cy="305.88" r="2.6"/><circle cx="376.05" cy="303.29" r="2.6"/><circle cx="414.49" cy="269.67" r="2.6"/><circle cx="452.93" cy="238.63" r="2.6"/><circle cx="491.38" cy="192.07" r="2.6"/><circle cx="529.82" cy="210.17" r="2.6"/><circle cx="568.27" cy="184.31" r="2.6"/><circle cx="606.71" cy="223.11" r="2.6"/><circle cx="645.15" cy="220.52" r="2.6"/><circle cx="683.60" cy="192.07" r="2.6"/><circle cx="722.04" cy="267.08" r="2.6"/><circle cx="760.48" cy="316.23" r="2.6"/><circle cx="798.93" cy="318.81" r="2.6"/><circle cx="837.37" cy="318.81" r="2.6"/><circle cx="875.81" cy="321.40" r="2.6"/><circle cx="914.26" cy="316.23" r="2.6"/><circle cx="952.70" cy="321.40" r="2.6"/></g></svg>

<div class="abs frame-l"></div>
<div class="abs frame-r"></div>
<div class="abs frame-b"></div>
</body></html>
